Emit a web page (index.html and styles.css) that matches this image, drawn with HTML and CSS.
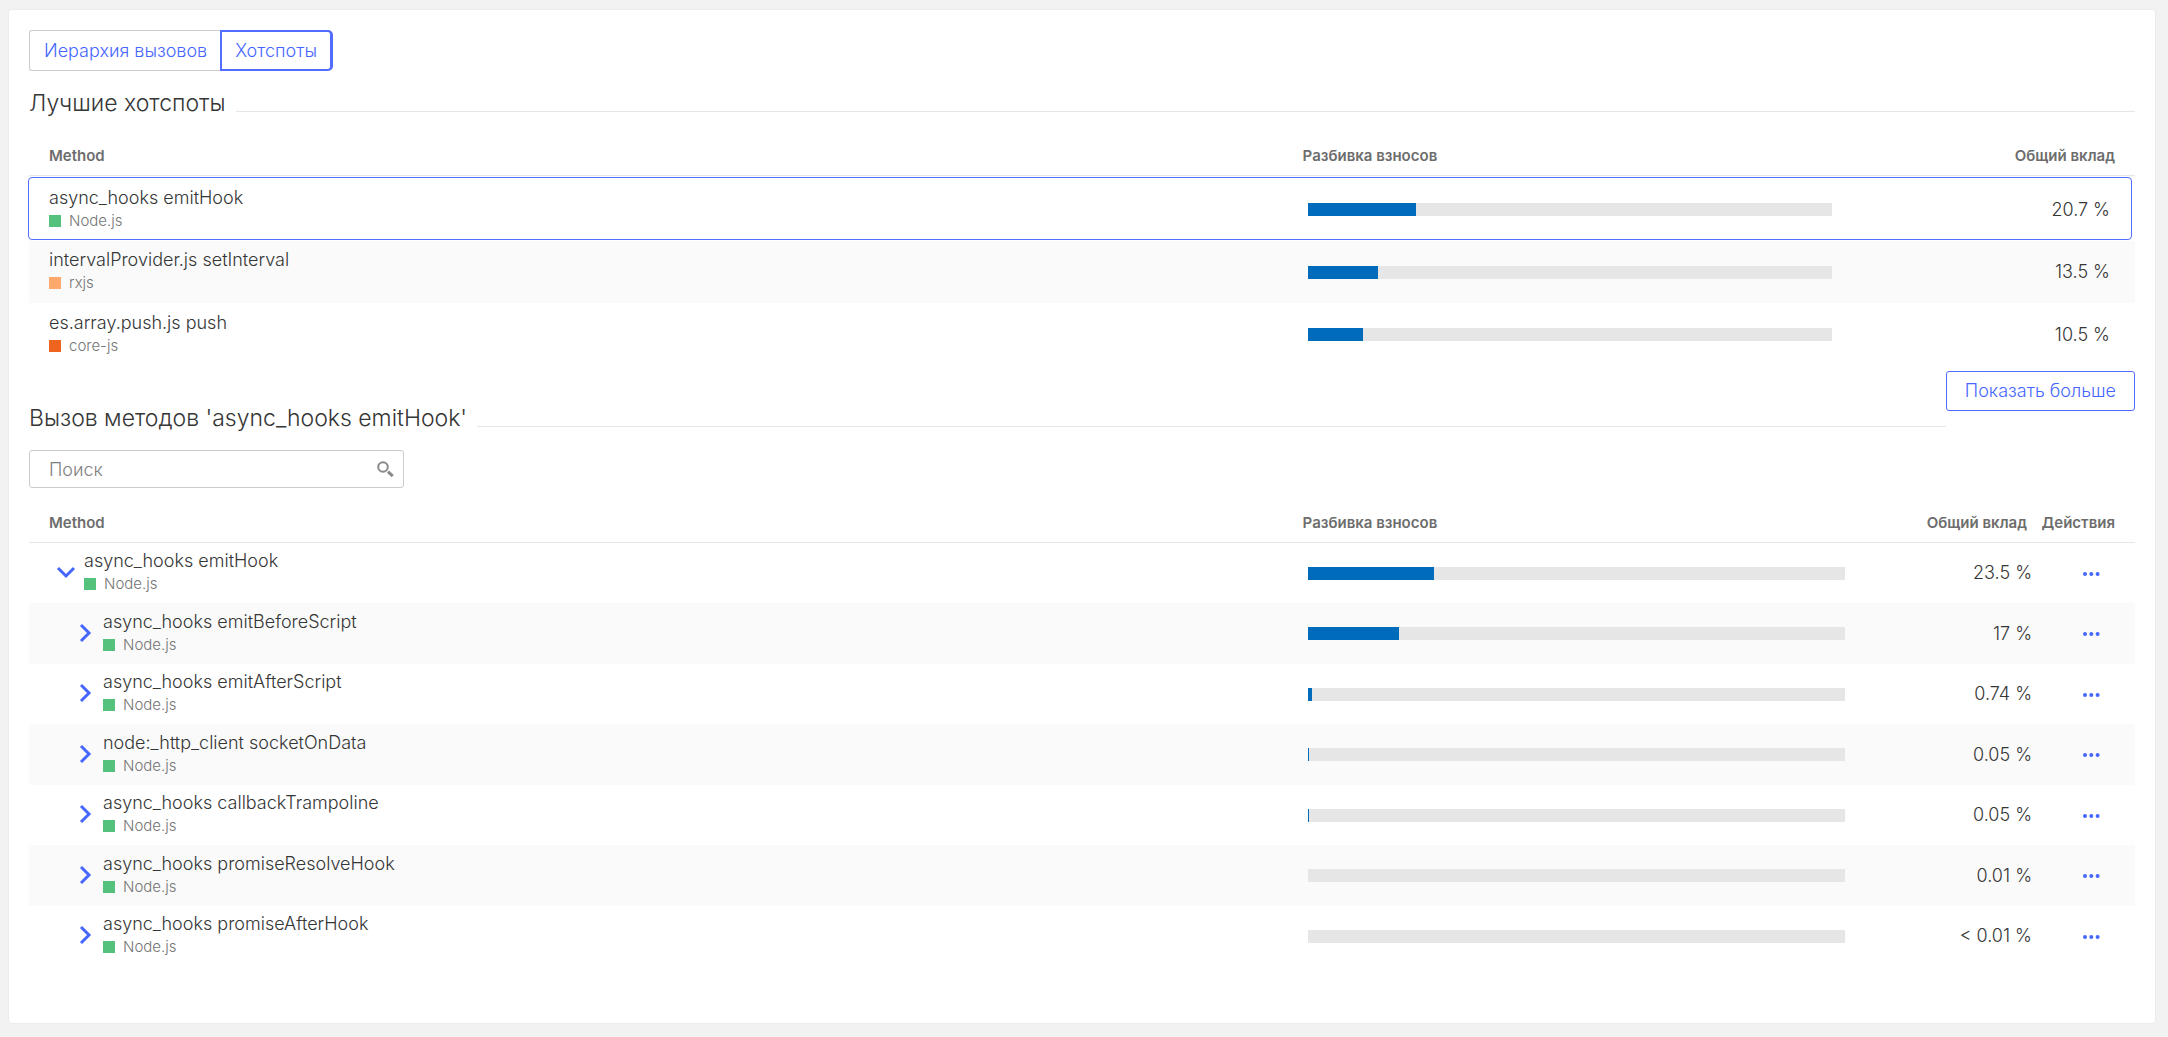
FILE: index.html
```
<!DOCTYPE html>
<html lang="ru">
<head>
  <meta charset="utf-8">
  <meta name="viewport" content="width=device-width, initial-scale=1.0">
  <title>Хотспоты</title>
  <link rel="stylesheet" href="styles.css">
</head>
<body>
  <!-- Shared icons -->
  <svg class="sprite" aria-hidden="true">
    <symbol id="icon-chevron" viewBox="0 0 20 20">
      <path d="M6 2 L14 10 L6 18" fill="none" stroke="currentColor" stroke-width="3"/>
    </symbol>
    <symbol id="icon-dots" viewBox="0 0 17 4">
      <circle cx="2" cy="2" r="2"/>
      <circle cx="8.3" cy="2" r="2"/>
      <circle cx="14.6" cy="2" r="2"/>
    </symbol>
  </svg>

  <main class="card">
    <div class="switch">
      <button class="switch-button" type="button">Иерархия вызовов</button>
      <button class="switch-button selected" type="button">Хотспоты</button>
    </div>

    <!-- Top hotspots -->
    <div class="section-header">
      <h2>Лучшие хотспоты</h2>
      <div class="section-line"></div>
    </div>

    <table class="hotspots">
      <thead>
        <tr>
          <th class="col-method">Method</th>
          <th class="col-bar">Разбивка взносов</th>
          <th class="col-total">Общий вклад</th>
        </tr>
      </thead>
      <tbody>
        <tr class="selected-row">
          <td>
            <div class="method-name">async_hooks emitHook</div>
            <div class="tech"><span class="tech-color node"></span>Node.js</div>
          </td>
          <td class="bar-cell"><div class="bar"><div class="bar-fill" style="width: 20.7%"></div></div></td>
          <td class="value">20.7 %</td>
        </tr>
        <tr>
          <td>
            <div class="method-name">intervalProvider.js setInterval</div>
            <div class="tech"><span class="tech-color rxjs"></span>rxjs</div>
          </td>
          <td class="bar-cell"><div class="bar"><div class="bar-fill" style="width: 13.5%"></div></div></td>
          <td class="value">13.5 %</td>
        </tr>
        <tr>
          <td>
            <div class="method-name">es.array.push.js push</div>
            <div class="tech"><span class="tech-color core-js"></span>core-js</div>
          </td>
          <td class="bar-cell"><div class="bar"><div class="bar-fill" style="width: 10.5%"></div></div></td>
          <td class="value">10.5 %</td>
        </tr>
      </tbody>
    </table>

    <!-- Calls of the selected method -->
    <div class="section-header calls-header">
      <h2>Вызов методов 'async_hooks emitHook'</h2>
      <div class="section-line"></div>
      <button class="more-button" type="button">Показать больше</button>
    </div>

    <div class="search">
      <input class="search-input" type="text" placeholder="Поиск" aria-label="Поиск">
      <svg class="search-icon" viewBox="0 0 18 18" aria-hidden="true">
        <circle cx="7" cy="7" r="4.8" fill="none" stroke="currentColor" stroke-width="2"/>
        <path d="M12 11.7 L16.7 16.2" stroke="currentColor" stroke-width="3"/>
      </svg>
    </div>

    <table class="calls">
      <thead>
        <tr>
          <th class="col-method">Method</th>
          <th class="col-bar">Разбивка взносов</th>
          <th class="col-total">Общий вклад</th>
          <th class="col-actions">Действия</th>
        </tr>
      </thead>
      <tbody>
        <tr>
          <td>
            <div class="tree-node">
              <button class="toggle open" type="button" aria-label="Свернуть"><svg><use href="#icon-chevron"/></svg></button>
              <div>
                <div class="method-name">async_hooks emitHook</div>
                <div class="tech"><span class="tech-color node"></span>Node.js</div>
              </div>
            </div>
          </td>
          <td class="bar-cell"><div class="bar"><div class="bar-fill" style="width: 23.5%"></div></div></td>
          <td class="value">23.5 %</td>
          <td class="actions"><button class="menu-button" type="button" aria-label="Действия"><svg><use href="#icon-dots"/></svg></button></td>
        </tr>
        <tr>
          <td>
            <div class="tree-node child">
              <button class="toggle" type="button" aria-label="Развернуть"><svg><use href="#icon-chevron"/></svg></button>
              <div>
                <div class="method-name">async_hooks emitBeforeScript</div>
                <div class="tech"><span class="tech-color node"></span>Node.js</div>
              </div>
            </div>
          </td>
          <td class="bar-cell"><div class="bar"><div class="bar-fill" style="width: 17%"></div></div></td>
          <td class="value">17 %</td>
          <td class="actions"><button class="menu-button" type="button" aria-label="Действия"><svg><use href="#icon-dots"/></svg></button></td>
        </tr>
        <tr>
          <td>
            <div class="tree-node child">
              <button class="toggle" type="button" aria-label="Развернуть"><svg><use href="#icon-chevron"/></svg></button>
              <div>
                <div class="method-name">async_hooks emitAfterScript</div>
                <div class="tech"><span class="tech-color node"></span>Node.js</div>
              </div>
            </div>
          </td>
          <td class="bar-cell"><div class="bar"><div class="bar-fill" style="width: 0.74%"></div></div></td>
          <td class="value">0.74 %</td>
          <td class="actions"><button class="menu-button" type="button" aria-label="Действия"><svg><use href="#icon-dots"/></svg></button></td>
        </tr>
        <tr>
          <td>
            <div class="tree-node child">
              <button class="toggle" type="button" aria-label="Развернуть"><svg><use href="#icon-chevron"/></svg></button>
              <div>
                <div class="method-name">node:_http_client socketOnData</div>
                <div class="tech"><span class="tech-color node"></span>Node.js</div>
              </div>
            </div>
          </td>
          <td class="bar-cell"><div class="bar"><div class="bar-fill thin" style="width: 0.05%"></div></div></td>
          <td class="value">0.05 %</td>
          <td class="actions"><button class="menu-button" type="button" aria-label="Действия"><svg><use href="#icon-dots"/></svg></button></td>
        </tr>
        <tr>
          <td>
            <div class="tree-node child">
              <button class="toggle" type="button" aria-label="Развернуть"><svg><use href="#icon-chevron"/></svg></button>
              <div>
                <div class="method-name">async_hooks callbackTrampoline</div>
                <div class="tech"><span class="tech-color node"></span>Node.js</div>
              </div>
            </div>
          </td>
          <td class="bar-cell"><div class="bar"><div class="bar-fill thin" style="width: 0.05%"></div></div></td>
          <td class="value">0.05 %</td>
          <td class="actions"><button class="menu-button" type="button" aria-label="Действия"><svg><use href="#icon-dots"/></svg></button></td>
        </tr>
        <tr>
          <td>
            <div class="tree-node child">
              <button class="toggle" type="button" aria-label="Развернуть"><svg><use href="#icon-chevron"/></svg></button>
              <div>
                <div class="method-name">async_hooks promiseResolveHook</div>
                <div class="tech"><span class="tech-color node"></span>Node.js</div>
              </div>
            </div>
          </td>
          <td class="bar-cell"><div class="bar"></div></td>
          <td class="value">0.01 %</td>
          <td class="actions"><button class="menu-button" type="button" aria-label="Действия"><svg><use href="#icon-dots"/></svg></button></td>
        </tr>
        <tr>
          <td>
            <div class="tree-node child">
              <button class="toggle" type="button" aria-label="Развернуть"><svg><use href="#icon-chevron"/></svg></button>
              <div>
                <div class="method-name">async_hooks promiseAfterHook</div>
                <div class="tech"><span class="tech-color node"></span>Node.js</div>
              </div>
            </div>
          </td>
          <td class="bar-cell"><div class="bar"></div></td>
          <td class="value">&lt; 0.01 %</td>
          <td class="actions"><button class="menu-button" type="button" aria-label="Действия"><svg><use href="#icon-dots"/></svg></button></td>
        </tr>
      </tbody>
    </table>
  </main>
</body>
</html>
```
FILE: styles.css
```
* {
  box-sizing: border-box;
}

body {
  margin: 0;
  padding: 10px 13px 13px 9px;
  background-color: #f2f2f2;
  font-family: Inter, "Liberation Sans", sans-serif;
  font-size: 18px;
  font-weight: 300;
  line-height: 24px;
  color: #353636;
}

button,
input {
  font: inherit;
}

button {
  color: #4667ff;
  cursor: pointer;
}

.sprite {
  display: none;
}

.card {
  padding: 20px 20px 57px;
  background-color: #fff;
  border-radius: 3px;
  box-shadow: 0 0 1px 1px #ececec;
}

/* View switch */
.switch {
  display: flex;
  align-items: stretch;
}

.switch-button {
  height: 41px;
  padding: 0 13px 0 14px;
  background: #fff;
  border: 1px solid #ccc;
  border-right: none;
  border-radius: 3px 0 0 3px;
}

.switch-button.selected {
  padding: 0 13px;
  border: 2px solid #526cff;
  border-right-width: 3px;
  border-radius: 0 5px 5px 0;
}

/* Section headers */
.section-header {
  display: flex;
  align-items: flex-end;
  height: 41px;
}

h2 {
  margin: 0 10px 0 0;
  font-size: 23px;
  font-weight: 300;
  line-height: 18px;
}

.section-line {
  flex: 1;
  border-bottom: 1px solid #e6e6e6;
}

.calls-header {
  height: 61px;
}

.more-button {
  align-self: flex-start;
  height: 40px;
  margin-top: 5px;
  padding: 0 18px;
  background: #fff;
  border: 1px solid #526cff;
  border-radius: 3px;
}

/* Search */
.search {
  position: relative;
  width: 375px;
  margin-top: 23px;
}

.search-input {
  display: block;
  width: 100%;
  height: 38px;
  padding: 0 40px 0 19px;
  border: 1px solid #ccc;
  border-radius: 3px;
  color: #353636;
}

.search-input::placeholder {
  color: #808080;
}

.search-icon {
  position: absolute;
  top: 10px;
  right: 10px;
  width: 18px;
  height: 18px;
  color: #898989;
}

/* Tables */
table {
  width: 100%;
  table-layout: fixed;
  border-collapse: separate;
  border-spacing: 0;
}

th {
  padding: 0 8px 0 10px;
  border-bottom: 1px solid #e6e6e6;
  font-size: 15px;
  font-weight: 600;
  text-align: left;
  color: #6d6d6d;
}

td {
  padding: 0 8px;
  vertical-align: middle;
}

th:first-child,
td:first-child {
  padding-left: 20px;
}

td:first-child {
  padding-bottom: 2px;
}

th:last-child {
  padding-right: 20px;
}

.hotspots thead tr {
  height: 64px;
}

.hotspots th {
  padding-top: 24px;
}

.hotspots tbody tr {
  height: 63px;
}

.hotspots tbody tr:nth-child(even) {
  height: 62px;
}

.calls thead tr {
  height: 55px;
}

.calls th {
  padding-top: 16px;
}

.calls tbody tr {
  height: 60px;
}

.calls tbody tr:nth-child(even) {
  height: 61px;
}

tbody tr:nth-child(even) {
  background-color: #fafafa;
}

.col-method {
  width: 60%;
}

th.col-total,
th.col-actions {
  padding-left: 0;
  text-align: right;
}

.hotspots .col-total {
  width: 295px;
}

.calls .col-total {
  width: 182px;
}

.col-actions {
  width: 100px;
}

.hotspots tbody .selected-row {
  position: relative;
  height: 65px;
}

.selected-row td {
  padding-top: 2px;
}

/* Frame around the selected row */
.selected-row td:last-child::after {
  content: "";
  position: absolute;
  top: 1px;
  right: 3px;
  bottom: 1px;
  left: -1px;
  border: 1px solid #526cff;
  border-radius: 4px;
}

.method-name {
  line-height: 24px;
}

.tech {
  display: flex;
  align-items: center;
  gap: 8px;
  font-size: 15px;
  line-height: 22px;
  color: #757575;
}

.tech-color {
  width: 12px;
  height: 12px;
}

.node {
  background-color: #54c27d;
}

.rxjs {
  background-color: #ffa86c;
}

.core-js {
  background-color: #ef651f;
}

td.bar-cell {
  padding-left: 15px;
}

.bar {
  height: 13px;
  background-color: #e6e6e6;
}

.bar-fill {
  height: 13px;
  background-color: #006bba;
}

.bar-fill.thin {
  min-width: 1px;
}

.value {
  text-align: right;
}

.hotspots .value {
  padding-right: 25px;
}

.calls .value {
  padding-right: 3px;
}

/* Call tree */
.tree-node {
  display: flex;
  align-items: center;
  gap: 8px;
  padding-left: 7px;
}

.tree-node.child {
  padding-left: 26px;
}

.toggle,
.menu-button {
  display: flex;
  padding: 0;
  background: none;
  border: none;
}

.toggle svg {
  width: 20px;
  height: 20px;
}

.toggle.open svg {
  transform: rotate(90deg);
}

td.actions {
  padding-top: 1px;
  padding-right: 35px;
}

.menu-button {
  margin-left: auto;
}

.menu-button svg {
  width: 17px;
  height: 4px;
  fill: currentColor;
}
```
